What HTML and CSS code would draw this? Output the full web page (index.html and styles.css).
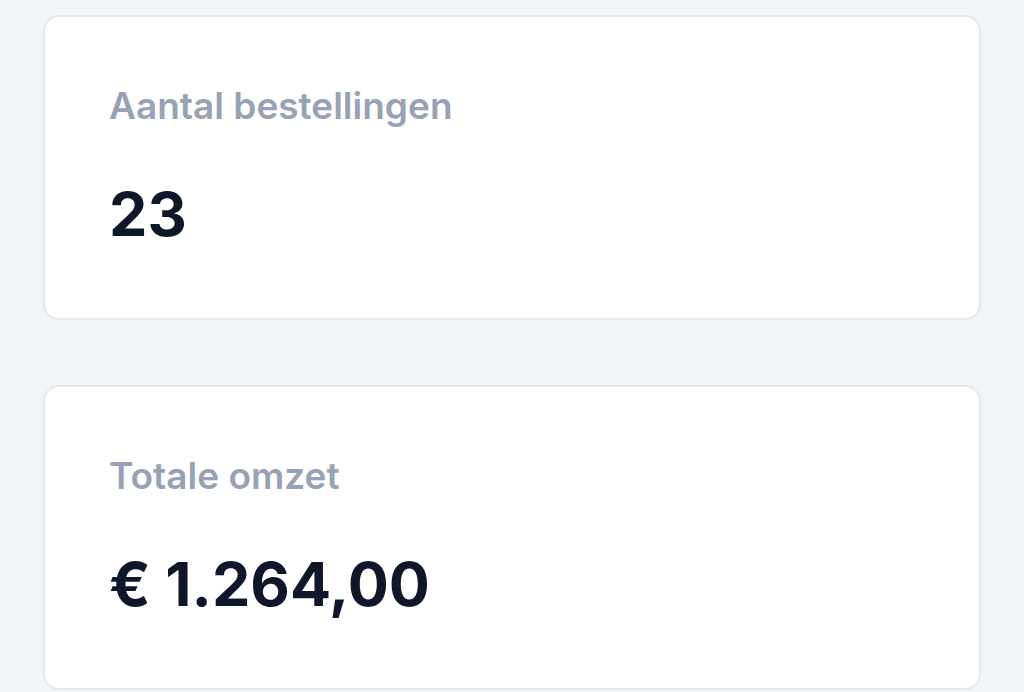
FILE: index.html
```html
<!DOCTYPE html>
<html lang="nl">
<head>
    <meta charset="UTF-8">
    <meta name="viewport" content="width=device-width, initial-scale=1.0">
    <title>Overzicht</title>
    <link rel="stylesheet" href="styles.css">
</head>
<body>
    <div class="stats">
        <div class="stat-card">
            <div class="stat-label">Aantal bestellingen</div>
            <div class="stat-value">23</div>
        </div>
        <div class="stat-card">
            <div class="stat-label">Totale omzet</div>
            <div class="stat-value">€ 1.264,00</div>
        </div>
    </div>
</body>
</html>
```

FILE: styles.css
```css
html, body {
    margin: 0;
    background-color: #f1f5f9;
}
body {
    font-family: 'Inter', 'Noto Sans', Arial, sans-serif;
    padding: 15px 43px 0;
}
.stats {
    display: flex;
    flex-direction: column;
    gap: 65px;
}
.stat-card {
    background-color: #fff;
    border: 2px solid #e2e8f0;
    border-radius: 16px;
    height: 305px;
    box-sizing: border-box;
    padding: 63px 64px 0;
}
.stat-label {
    color: #97a2b4;
    font-size: 37px;
    font-weight: 600;
    line-height: 52px;
}
.stat-value {
    color: #0f172a;
    font-size: 61px;
    font-weight: 700;
    line-height: 74px;
    margin-top: 45px;
}
```
